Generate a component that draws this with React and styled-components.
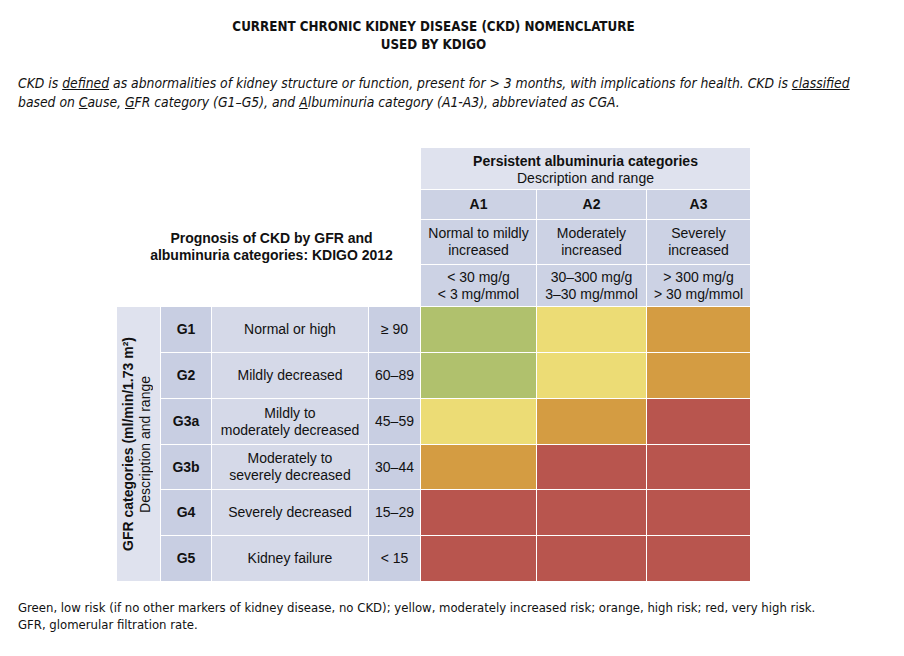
import React from "react";
import styled, { createGlobalStyle } from "styled-components";

const Global = createGlobalStyle`
  body {
    margin: 0;
    background: #fff;
    color: #111;
  }
`;

const Page = styled.div`
  width: 904px;
  height: 656px;
  padding-top: 18px;
  box-sizing: border-box;
  font-family: "DejaVu Sans Condensed", "Liberation Sans", sans-serif;
`;

const Title = styled.h1`
  margin: 0;
  text-align: center;
  font-size: 13.3px;
  line-height: 18px;
  font-weight: bold;
  padding-right: 37px;
`;

const Intro = styled.p`
  margin: 20px 0 0 18px;
  font-size: 13.8px;
  line-height: 19px;
  font-style: italic;
`;

const Table = styled.div`
  margin: 36px 0 0 117px;
  display: grid;
  grid-template-columns: 43px 50px 156px 51px 115px 109px 103px;
  grid-template-rows: 41px 29px 44px 41px 45px 45px 45px 44px 45px 45px;
  gap: 1px;
  width: 633px;
  font-family: "Liberation Sans", Arial, sans-serif;
  font-size: 14px;
  line-height: 17px;
  color: #111;
`;

const Cell = styled.div`
  display: flex;
  align-items: center;
  justify-content: center;
  text-align: center;
  background: ${(p) => p.$bg || "#d5d9e8"};
  font-weight: ${(p) => (p.$bold ? "bold" : "normal")};
`;

const Prognosis = styled.div`
  grid-column: 1 / 5;
  grid-row: 2 / 5;
  display: flex;
  align-items: center;
  justify-content: center;
  text-align: center;
  font-weight: bold;
  font-size: 14px;
  line-height: 17px;
  padding-left: 6px;
  padding-bottom: 2px;
`;

const TopHeader = styled(Cell)`
  grid-column: 5 / 8;
  grid-row: 1;
  flex-direction: column;
  background: #dfe2ee;
  padding-top: 2px;
`;

const VerticalHead = styled.div`
  grid-column: 1;
  grid-row: 5 / 11;
  background: #dfe2ee;
  display: flex;
  align-items: center;
  justify-content: center;
`;

const VerticalText = styled.div`
  writing-mode: vertical-rl;
  transform: rotate(180deg);
  text-align: center;
  line-height: 17px;
  white-space: nowrap;
  padding-left: 3px;
`;

const Risk = styled.div`
  background: ${(p) => p.$bg};
`;

const COLORS = {
  g: "#b0c16d",
  y: "#ecdc75",
  o: "#d49c42",
  r: "#b8554e",
};

const ALB = [
  { code: "A1", desc: ["Normal to mildly", "increased"], range: ["< 30 mg/g", "< 3 mg/mmol"] },
  { code: "A2", desc: ["Moderately", "increased"], range: ["30–300 mg/g", "3–30 mg/mmol"] },
  { code: "A3", desc: ["Severely", "increased"], range: ["> 300 mg/g", "> 30 mg/mmol"] },
];

const GFR = [
  { code: "G1", desc: ["Normal or high"], range: "≥ 90", risk: "gyo" },
  { code: "G2", desc: ["Mildly decreased"], range: "60–89", risk: "gyo" },
  { code: "G3a", desc: ["Mildly to", "moderately decreased"], range: "45–59", risk: "yor" },
  { code: "G3b", desc: ["Moderately to", "severely decreased"], range: "30–44", risk: "orr" },
  { code: "G4", desc: ["Severely decreased"], range: "15–29", risk: "rrr" },
  { code: "G5", desc: ["Kidney failure"], range: "< 15", risk: "rrr" },
];

function Lines({ items }) {
  return (
    <div>
      {items.map((t, i) => (
        <div key={i}>{t}</div>
      ))}
    </div>
  );
}

const Footer = styled.div`
  margin: 18px 0 0 18px;
  font-size: 13px;
  line-height: 17px;
`;

export default function App() {
  return (
    <Page>
      <Global />
      <Title>
        CURRENT CHRONIC KIDNEY DISEASE (CKD) NOMENCLATURE
        <br />
        USED BY KDIGO
      </Title>
      <Intro>
        CKD is <u>defined</u> as abnormalities of kidney structure or function, present for {">"} 3 months, with
        implications for health. CKD is <u>classified</u>
        <br />
        based on <u>C</u>ause, <u>G</u>FR category (G1–G5), and <u>A</u>lbuminuria category (A1-A3), abbreviated as CGA.
      </Intro>

      <Table>
        <TopHeader>
          <b>Persistent albuminuria categories</b>
          <span>Description and range</span>
        </TopHeader>
        <Prognosis>
          Prognosis of CKD by GFR and
          <br />
          albuminuria categories: KDIGO 2012
        </Prognosis>
        {ALB.map((a, i) => (
          <React.Fragment key={a.code}>
            <Cell $bold $bg="#ccd2e4" style={{ gridColumn: 5 + i, gridRow: 2 }}>
              {a.code}
            </Cell>
            <Cell $bg="#ccd2e4" style={{ gridColumn: 5 + i, gridRow: 3 }}>
              <Lines items={a.desc} />
            </Cell>
            <Cell $bg="#ccd2e4" style={{ gridColumn: 5 + i, gridRow: 4 }}>
              <Lines items={a.range} />
            </Cell>
          </React.Fragment>
        ))}

        <VerticalHead>
          <VerticalText>
            <b>GFR categories (ml/min/1.73 m²)</b>
            <br />
            Description and range
          </VerticalText>
        </VerticalHead>

        {GFR.map((g, r) => (
          <React.Fragment key={g.code}>
            <Cell $bold $bg="#c8cee2" style={{ gridColumn: 2, gridRow: 5 + r }}>
              {g.code}
            </Cell>
            <Cell $bg="#d5d9e8" style={{ gridColumn: 3, gridRow: 5 + r }}>
              <Lines items={g.desc} />
            </Cell>
            <Cell $bg="#c8cee2" style={{ gridColumn: 4, gridRow: 5 + r }}>
              {g.range}
            </Cell>
            {g.risk.split("").map((k, c) => (
              <Risk key={c} $bg={COLORS[k]} style={{ gridColumn: 5 + c, gridRow: 5 + r }} />
            ))}
          </React.Fragment>
        ))}
      </Table>

      <Footer>
        Green, low risk (if no other markers of kidney disease, no CKD); yellow, moderately increased risk; orange, high
        risk; red, very high risk.
        <br />
        GFR, glomerular filtration rate.
      </Footer>
    </Page>
  );
}
